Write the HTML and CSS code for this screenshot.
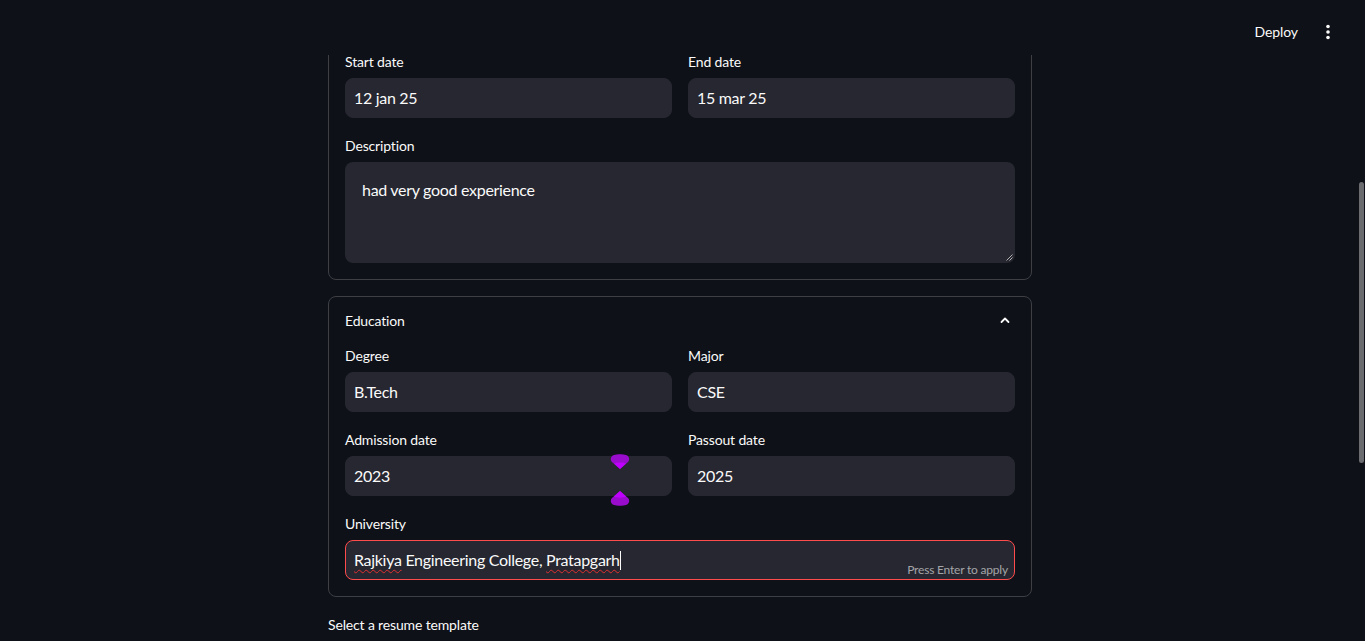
FILE: index.html
```html
<!DOCTYPE html>
<html lang="en">
<head>
<meta charset="utf-8">
<title>Resume Builder</title>
<link rel="stylesheet" href="styles.css">
</head>
<body>
<header class="topbar">
  <button class="deploy">Deploy</button>
  <button class="kebab" aria-label="Main menu">
    <svg width="16" height="16" viewBox="0 0 16 16"><circle cx="8" cy="2.5" r="1.8" fill="#fafafa"/><circle cx="8" cy="8" r="1.8" fill="#fafafa"/><circle cx="8" cy="13.5" r="1.8" fill="#fafafa"/></svg>
  </button>
</header>

<div class="scrollbar"></div>

<main class="main">
  <section class="card card-top">
    <div class="grid">
      <div class="field">
        <label class="label">Start date</label>
        <div class="input">12 jan 25</div>
      </div>
      <div class="field">
        <label class="label">End date</label>
        <div class="input">15 mar 25</div>
      </div>
    </div>
    <div class="field">
      <label class="label">Description</label>
      <div class="textarea">had very good experience
        <svg class="grip" width="8" height="8" viewBox="0 0 8 8"><path d="M7.5 1.5 L1.5 7.5 M7.5 4.5 L4.5 7.5" stroke="#b0b0b0" stroke-width="1"/></svg>
      </div>
    </div>
  </section>

  <section class="card">
    <div class="summary">
      <span>Education</span>
      <svg class="chev" width="12" height="12" viewBox="0 0 12 12"><path d="M2.5 8 L6 4.5 L9.5 8" fill="none" stroke="#fafafa" stroke-width="1.8" stroke-linecap="round" stroke-linejoin="round"/></svg>
    </div>
    <div class="card-body">
      <div class="grid">
        <div class="field">
          <label class="label">Degree</label>
          <div class="input">B.Tech</div>
        </div>
        <div class="field">
          <label class="label">Major</label>
          <div class="input">CSE</div>
        </div>
      </div>
      <div class="grid">
        <div class="field">
          <label class="label">Admission date</label>
          <div class="input">2023</div>
        </div>
        <div class="field">
          <label class="label">Passout date</label>
          <div class="input">2025</div>
        </div>
      </div>
      <div class="field">
        <label class="label">University</label>
        <div class="input input-focus"><span class="typo">Rajkiya</span> Engineering College, <span class="typo">Pratapgarh</span><span class="caret"></span>
          <span class="hint">Press Enter to apply</span>
        </div>
      </div>
    </div>
  </section>

  <div class="field field-last">
    <label class="label">Select a resume template</label>
  </div>

  <svg class="blob blob-top" width="22" height="18" viewBox="0 0 22 18"><path d="M11 16 L3 9 C1 7 1.5 3 5 2 C8 1 14 1 17 2 C20.5 3 21 7 19 9 Z" fill="#9a0ccc"/><path d="M11 16 L5 10.5 C8 9 14 9 17 10.5 Z" fill="#c000ff"/></svg>
  <svg class="blob blob-bottom" width="22" height="18" viewBox="0 0 22 18"><path d="M11 2 L3 9 C1 11 1.5 15 5 16 C8 17 14 17 17 16 C20.5 15 21 11 19 9 Z" fill="#9a0ccc"/><path d="M11 2 L5 7.5 C8 9 14 9 17 7.5 Z" fill="#c000ff"/></svg>
</main>
</body>
</html>
```

FILE: styles.css
```css
* { box-sizing: border-box; }

html, body {
  margin: 0;
  height: 100%;
  overflow: hidden;
}

body {
  background: #0e1117;
  color: #fafafa;
  font-family: "Lato", "Source Sans Pro", "Liberation Sans", sans-serif;
  padding-right: 5px;
}

.topbar {
  position: fixed;
  top: 0;
  left: 0;
  right: 0;
  height: 55px;
  background: #0e1117;
  z-index: 10;
  display: flex;
  align-items: center;
  justify-content: flex-end;
  padding: 0 25px 0 0;
  gap: 10px;
}

.deploy {
  background: transparent;
  border: none;
  color: #fafafa;
  font: inherit;
  font-size: 14px;
  letter-spacing: -0.1px;
  padding: 4px 8px;
  margin-top: 8px;
}

.kebab {
  background: transparent;
  border: none;
  padding: 4px;
  margin-top: 8px;
  display: flex;
}

.scrollbar {
  position: fixed;
  right: 1px;
  top: 182px;
  width: 5px;
  height: 281px;
  border-radius: 3px;
  background: #6b6c70;
}

.main {
  position: relative;
  width: 704px;
  margin: 0 auto;
  padding-top: 33px;
  display: flex;
  flex-direction: column;
  gap: 16px;
}

.card {
  border: 1px solid #3d3f45;
  border-radius: 8px;
}

.card-top {
  padding: 16px;
  display: flex;
  flex-direction: column;
  gap: 16px;
}

.grid {
  display: grid;
  grid-template-columns: 1fr 1fr;
  gap: 16px;
}

.field {
  display: flex;
  flex-direction: column;
}

.label {
  font-size: 14px;
  height: 24px;
  line-height: 24px;
  margin-bottom: 4px;
  color: #fafafa;
  letter-spacing: -0.15px;
}

.input {
  position: relative;
  height: 40px;
  background: #262730;
  border: 1px solid #262730;
  border-radius: 8px;
  padding: 0 8px;
  font-size: 16px;
  line-height: 38px;
  color: #fafafa;
  white-space: nowrap;
  letter-spacing: -0.3px;
}

.input-focus {
  border-color: #ff4b4b;
}

.typo {
  text-decoration: underline wavy #e03030;
  text-decoration-thickness: 1px;
  text-underline-offset: 3px;
}

.caret {
  display: inline-block;
  width: 1px;
  height: 19px;
  background: #fafafa;
  vertical-align: -4px;
}

.hint {
  position: absolute;
  right: 6px;
  bottom: 1px;
  font-size: 12px;
  line-height: 16px;
  color: rgba(250, 250, 250, 0.6);
  letter-spacing: -0.2px;
}

.textarea {
  position: relative;
  height: 101px;
  background: #262730;
  border-radius: 8px;
  padding: 16px 17px;
  font-size: 16px;
  line-height: 24px;
  color: #fafafa;
  letter-spacing: -0.3px;
}

.grip {
  position: absolute;
  right: 2px;
  bottom: 2px;
}

.summary {
  height: 46px;
  padding: 0 16px;
  display: flex;
  align-items: center;
  justify-content: space-between;
  font-size: 14px;
  letter-spacing: -0.15px;
}

.chev {
  margin-right: 4px;
}

.card-body {
  padding: 1px 16px 16px;
  display: flex;
  flex-direction: column;
  gap: 16px;
}

.blob {
  position: absolute;
  left: 281px;
}

.blob-top { top: 453px; }
.blob-bottom { top: 489px; }
```
